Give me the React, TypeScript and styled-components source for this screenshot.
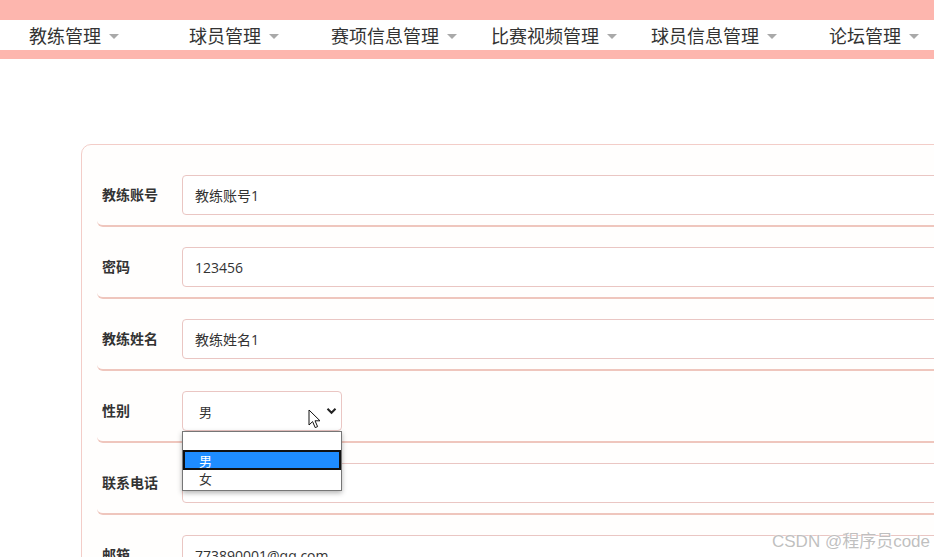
import React from "react";
import styled, { createGlobalStyle } from "styled-components";

const Global = createGlobalStyle`
  html, body { margin: 0; padding: 0; overflow: hidden; background: #ffffff; }
  body { font-family: "Open Sans", "Noto Sans CJK SC", sans-serif; color: #333; }
  * { box-sizing: border-box; }
`;

const Page = styled.div`
  width: 934px;
  height: 557px;
  overflow: hidden;
  position: relative;
  background: #fff;
`;

const TopBar = styled.div`
  height: 20px;
  background: #fdb6ae;
`;

const Nav = styled.nav`
  height: 30px;
  display: flex;
  align-items: center;
  background: #fff;
  white-space: nowrap;
`;

const NavItem = styled.div`
  flex: 0 0 160px;
  display: flex;
  align-items: center;
  justify-content: center;
  padding-right: 12px;
  font-family: "Noto Sans CJK SC", sans-serif;
  font-size: 18px;
  color: #333;
  line-height: 30px;
`;

const Caret = styled.span`
  display: inline-block;
  margin-left: 8px;
  width: 0;
  height: 0;
  border-left: 5px solid transparent;
  border-right: 5px solid transparent;
  border-top: 5px solid #a9a9a9;
  transform: translateY(1px);
`;

const BottomBar = styled.div`
  height: 9px;
  background: #fdb6ae;
`;

const Card = styled.div`
  margin: 85px 0 0 81px;
  width: 1000px;
  border: 1px solid #f3cdc8;
  border-radius: 10px;
  background: #fffefd;
  padding: 20px 0 0 15px;
`;

const Row = styled.div`
  display: flex;
  align-items: center;
  padding: 10px 0 10px 5px;
  margin-bottom: 10px;
  border-bottom: 2px solid #efc6bd;
  border-radius: 6px;
`;

const Label = styled.div`
  width: 80px;
  font-family: "Noto Sans CJK SC", sans-serif;
  font-size: 14px;
  font-weight: 700;
  color: #333;
  transform: translateY(-1px);
`;

const Input = styled.div`
  flex: 1;
  height: 40px;
  border: 1px solid #eac6c3;
  border-radius: 4px;
  background: #fff;
  display: flex;
  align-items: center;
  padding-left: 12px;
  font-size: 14px;
  font-family: "Open Sans", "Noto Sans CJK SC", sans-serif;
  color: #333;
`;

const SelectWrap = styled.div`
  position: relative;
  width: 160px;
  height: 40px;
`;

const SelectBox = styled.div`
  width: 160px;
  height: 40px;
  border: 1px solid #eac6c3;
  border-radius: 4px;
  background: #fff;
  display: flex;
  align-items: center;
  padding-left: 16px;
  font-size: 13px;
  font-family: "Noto Sans CJK SC", sans-serif;
  color: #333;
`;

const Chevron = styled.svg`
  position: absolute;
  right: 5px;
  top: 16px;
`;

const Cursor = styled.svg`
  position: absolute;
  left: 126px;
  top: 18px;
`;

const List = styled.div`
  position: absolute;
  left: 0;
  top: 40px;
  width: 160px;
  border: 1px solid #767676;
  background: #fff;
  box-shadow: 0 2px 5px rgba(0, 0, 0, 0.3);
  z-index: 5;
`;

const Option = styled.div<{ $selected?: boolean; $h: number }>`
  height: ${(p) => p.$h}px;
  line-height: ${(p) => p.$h - 2}px;
  padding-left: ${(p) => (p.$selected ? 14 : 16)}px;
  font-size: 13px;
  font-family: "Noto Sans CJK SC", sans-serif;
  color: ${(p) => (p.$selected ? "#fff" : "#333")};
  background: ${(p) => (p.$selected ? "#1e8cff" : "#fff")};
  border: ${(p) => (p.$selected ? "2px solid #111" : "none")};
`;

const Watermark = styled.div`
  position: absolute;
  right: 4px;
  bottom: 5px;
  font-family: "Liberation Sans", "Noto Sans CJK SC", sans-serif;
  font-size: 17px;
  color: rgba(180, 180, 180, 0.85);
  text-shadow: 0 0 1px #fff, 0 0 2px #fff;
`;

const navItems = ["教练管理", "球员管理", "赛项信息管理", "比赛视频管理", "球员信息管理", "论坛管理"];

export default function App() {
  return (
    <Page>
      <Global />
      <TopBar />
      <Nav>
        {navItems.map((n) => (
          <NavItem key={n}>
            {n}
            <Caret />
          </NavItem>
        ))}
      </Nav>
      <BottomBar />
      <Card>
        <Row>
          <Label>教练账号</Label>
          <Input>教练账号1</Input>
        </Row>
        <Row>
          <Label>密码</Label>
          <Input>123456</Input>
        </Row>
        <Row>
          <Label>教练姓名</Label>
          <Input>教练姓名1</Input>
        </Row>
        <Row>
          <Label>性别</Label>
          <SelectWrap>
            <SelectBox>男</SelectBox>
            <Chevron width="11" height="8" viewBox="0 0 11 8">
              <path d="M1.5 1.8 L5.5 5.8 L9.5 1.8" fill="none" stroke="#222" strokeWidth="2" />
            </Chevron>
            <Cursor width="14" height="20" viewBox="0 0 14 20">
              <path
                d="M1 1 L1 16 L4.6 12.6 L7.2 18.6 L9.6 17.6 L7 11.8 L12 11.8 Z"
                fill="#fff"
                stroke="#111"
                strokeWidth="1"
                strokeLinejoin="round"
              />
            </Cursor>
            <List>
              <Option $h={18}>&nbsp;</Option>
              <Option $h={20} $selected>男</Option>
              <Option $h={20}>女</Option>
            </List>
          </SelectWrap>
        </Row>
        <Row>
          <Label>联系电话</Label>
          <Input></Input>
        </Row>
        <Row>
          <Label>邮箱</Label>
          <Input>773890001@qq.com</Input>
        </Row>
      </Card>
      <Watermark>CSDN @程序员code</Watermark>
    </Page>
  );
}
